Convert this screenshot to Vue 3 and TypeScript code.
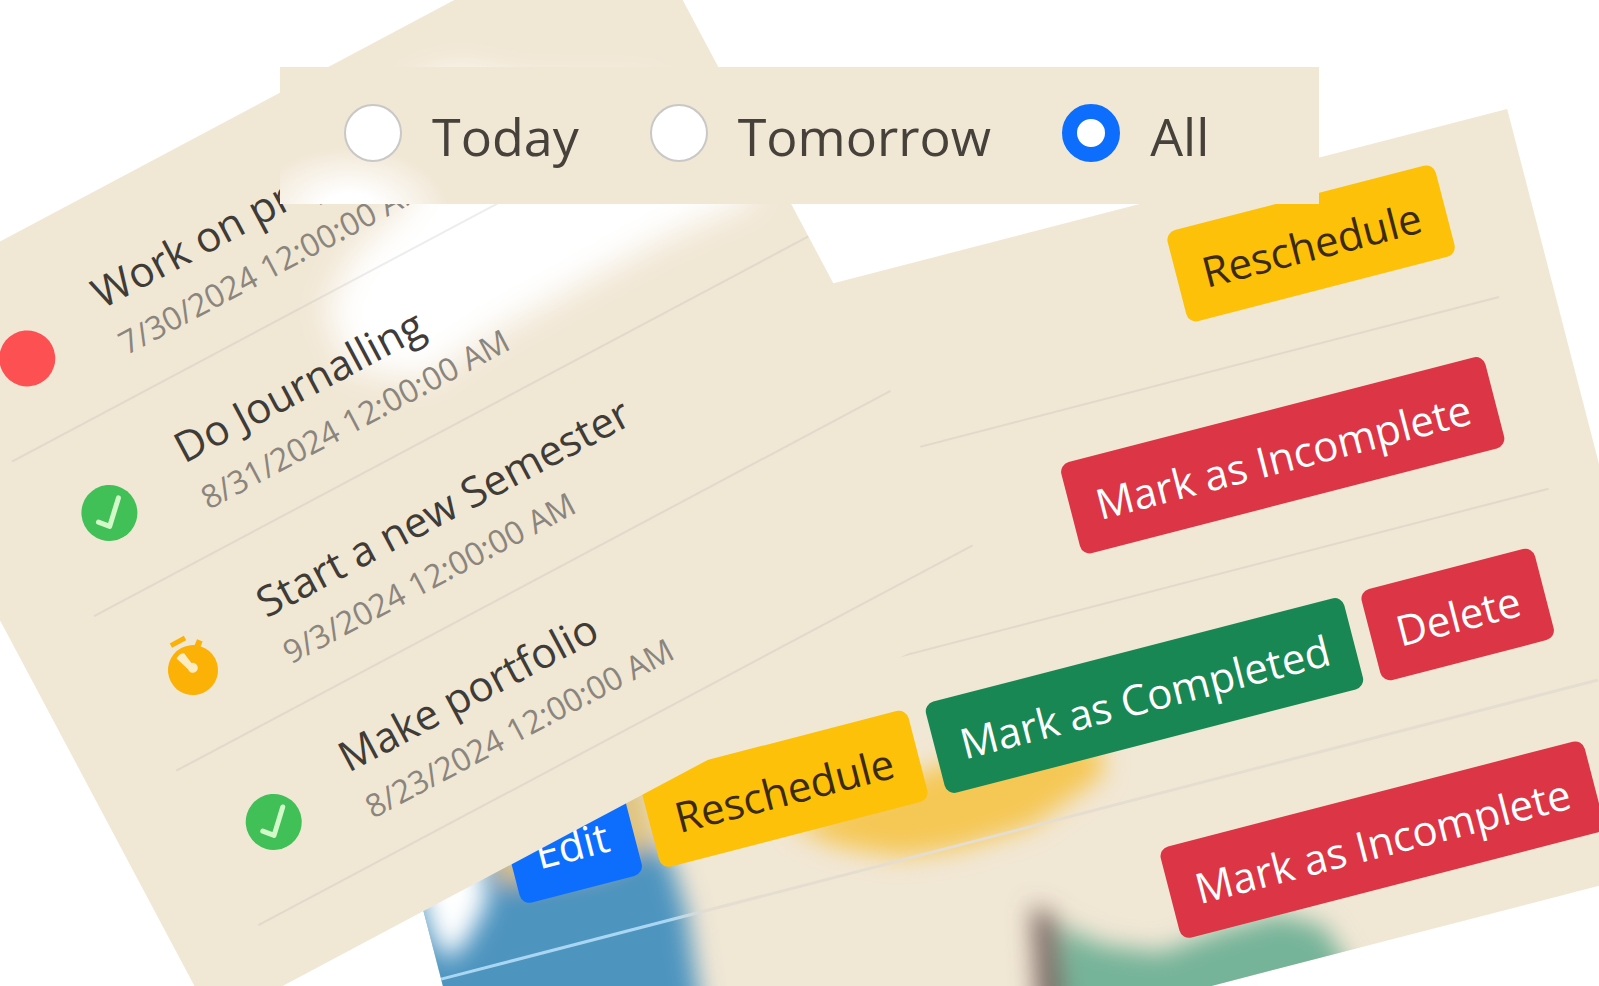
<script setup lang="ts">
import { ref } from 'vue'

type Status = 'overdue' | 'done' | 'pending'
type Tone = 'primary' | 'warning' | 'success' | 'danger'

interface Task {
  title: string
  due: string
  status: Status
}

interface Action {
  label: string
  tone: Tone
}

const filters: string[] = ['Today', 'Tomorrow', 'All']
const selected = ref<string>('All')

const tasks: Task[] = [
  { title: 'Work on project', due: '7/30/2024 12:00:00 AM', status: 'overdue' },
  { title: 'Do Journalling', due: '8/31/2024 12:00:00 AM', status: 'done' },
  { title: 'Start a new Semester', due: '9/3/2024 12:00:00 AM', status: 'pending' },
  { title: 'Make portfolio', due: '8/23/2024 12:00:00 AM', status: 'done' },
]

const actionRows: Action[][] = [
  [{ label: 'Reschedule', tone: 'warning' }],
  [{ label: 'Mark as Incomplete', tone: 'danger' }],
  [
    { label: 'Edit', tone: 'primary' },
    { label: 'Reschedule', tone: 'warning' },
    { label: 'Mark as Completed', tone: 'success' },
    { label: 'Delete', tone: 'danger' },
  ],
  [{ label: 'Mark as Incomplete', tone: 'danger' }],
]
</script>

<template>
  <main class="canvas">
    <section class="panel actions-panel" aria-label="Task actions">
      <svg class="backdrop" viewBox="0 0 1250 774" aria-hidden="true">
        <defs>
          <filter id="soft-wide" x="-50%" y="-50%" width="200%" height="200%">
            <feGaussianBlur stdDeviation="12" />
          </filter>
        </defs>
        <g transform="rotate(14.5) translate(-297 -422)">
          <g filter="url(#soft-wide)">
            <path d="M380 1040V860L500 840H650L670 860L686 910L706 1040Z" fill="#4d94bf" />
            <path d="M490 850L520 800L640 770L660 840L600 868L500 884Z" fill="#e0c480" />
            <path d="M790 826L840 846L900 856L960 848L1030 826L1102 776V745L1000 740L880 790Z" fill="#f5c755" />
            <path d="M1032 905L1056 918L1070 1050H1040Z" fill="#77635f" />
            <path d="M1062 925L1100 944L1160 952L1220 930L1280 914L1324 926L1370 1000L1300 1050H1064Z" fill="#76b499" />
          </g>
          <path d="M410 860L480 850L488 900L466 942L446 960L430 930Z" fill="#fff" filter="url(#soft-wide)" />
        </g>
      </svg>
      <div v-for="(row, i) in actionRows" :key="i" class="action-row">
        <button v-for="a in row" :key="a.label" type="button" :class="['btn', a.tone]">{{ a.label }}</button>
      </div>
    </section>

    <section class="panel tasks-panel" aria-label="Tasks">
      <svg class="backdrop" viewBox="0 0 894 790" aria-hidden="true">
        <defs>
          <filter id="soft" x="-50%" y="-50%" width="200%" height="200%">
            <feGaussianBlur stdDeviation="16" />
          </filter>
        </defs>
        <g transform="rotate(28) translate(157 -325)" filter="url(#soft)">
          <path d="M410 84L460 70L520 84L650 86L760 196L660 240L570 290L490 335L424 380L350 368L326 310L352 256L414 196Z" fill="#fff" />
        </g>
      </svg>
      <ul class="tasks">
        <li v-for="t in tasks" :key="t.title" class="task">
          <svg class="status" viewBox="-32 -36 64 64" aria-hidden="true">
            <circle v-if="t.status === 'overdue'" r="28" fill="#fd5053" />
            <g v-else-if="t.status === 'done'">
              <circle r="28" fill="#40c057" />
              <path d="M-14 3L-6 12L15 -9" fill="none" stroke="#d3f9c8" stroke-width="5" stroke-linecap="round" stroke-linejoin="round" />
            </g>
            <g v-else>
              <circle cy="3" r="25" fill="#fcb107" />
              <path d="M-8 -29H8" stroke="#fcb107" stroke-width="5" />
              <path d="M14 -15L20 -20" stroke="#fcb107" stroke-width="6" />
              <path d="M-9 -15Q-4 -18 0 -16L2 -4A5 5 0 1 1 -4 0Z" fill="#fbecc4" />
            </g>
          </svg>
          <div class="info">
            <h2 class="title">{{ t.title }}</h2>
            <p class="due">{{ t.due }}</p>
          </div>
        </li>
      </ul>
    </section>

    <fieldset class="filter-bar">
      <label v-for="f in filters" :key="f" class="option">
        <input v-model="selected" type="radio" name="range" :value="f" class="radio" />
        <span>{{ f }}</span>
      </label>
    </fieldset>
  </main>
</template>

<style>
body {
  background: #fff;
  overflow: hidden;
}
</style>

<style scoped>
.canvas {
  position: relative;
  width: 100%;
  height: 100vh;
  overflow: hidden;
  background: #fff;
  font-family: "Open Sans", "Noto Sans", sans-serif;
}

.panel {
  position: absolute;
  box-sizing: border-box;
  background: #f1e7d5;
  overflow: hidden;
  transform-origin: 0 0;
}

.backdrop {
  position: absolute;
  inset: 0;
  width: 100%;
  height: 100%;
}

.tasks-panel {
  left: -157px;
  top: 325px;
  width: 894px;
  padding: 26px 0 64px 85px;
  transform: rotate(-28deg);
}

.actions-panel {
  left: 297px;
  top: 422px;
  width: 1250px;
  padding-right: 55px;
  transform: rotate(-14.5deg);
}

.tasks {
  position: relative;
  margin: 0;
  padding: 0;
  list-style: none;
}

.task {
  display: flex;
  align-items: flex-start;
  gap: 57px;
  box-sizing: border-box;
  height: 175px;
  padding-left: 30px;
  border-bottom: 2px solid rgba(160, 155, 160, 0.18);
}

.status {
  flex: none;
  width: 64px;
  height: 64px;
  margin-top: 54px;
}

.info {
  padding-top: 38px;
  white-space: nowrap;
}

.title {
  margin: 0;
  font-size: 42px;
  line-height: 56px;
  font-weight: 400;
  color: #3f3b36;
}

.due {
  margin: 0;
  font-size: 32px;
  line-height: 56px;
  font-weight: 400;
  color: #8a857d;
}

.action-row {
  position: relative;
  display: flex;
  justify-content: flex-end;
  align-items: center;
  gap: 18px;
  box-sizing: border-box;
  height: 198px;
  padding: 0 30px 0 0;
  border-bottom: 2px solid rgba(160, 155, 160, 0.18);
}

.action-row:first-of-type {
  height: 181px;
  padding-bottom: 51px;
  align-items: flex-end;
}

.action-row:nth-of-type(3) {
  border-bottom-width: 3px;
  border-image: linear-gradient(90deg, #a9d7f3 0, #a9d7f3 236px, #e5ddd0 276px, #e5ddd0 100%) 3;
}

.action-row:last-of-type {
  border-bottom: 0;
}

.btn {
  flex: none;
  height: 94px;
  padding: 2px 26px 0;
  border: 0;
  border-radius: 10px;
  font-family: inherit;
  font-size: 42px;
  line-height: 56px;
  color: #fff;
  white-space: nowrap;
}

.primary {
  background: #0d6efd;
}

.warning {
  background: #fdc109;
  color: #3b2b0c;
}

.success {
  background: #198754;
}

.danger {
  background: #dc3545;
}

.filter-bar {
  position: absolute;
  left: 280px;
  top: 67px;
  display: flex;
  align-items: center;
  gap: 71px;
  box-sizing: border-box;
  width: 1039px;
  height: 137px;
  margin: 0;
  padding: 0 0 0 64px;
  border: 0;
  background: radial-gradient(ellipse 100px 66px at 70px 146px, #fff 0, #fff 30%, rgba(255, 255, 255, 0) 100%) #f1e7d5;
}

.option {
  display: flex;
  align-items: center;
  gap: 30px;
  font-size: 52px;
  line-height: 72px;
  color: #46413b;
}

.radio {
  appearance: none;
  box-sizing: border-box;
  width: 58px;
  height: 58px;
  margin: 0 0 6px;
  border: 2px solid #c9c8c6;
  border-radius: 50%;
  background: #fff;
}

.radio:checked {
  border: 15px solid #0d6efd;
}
</style>
